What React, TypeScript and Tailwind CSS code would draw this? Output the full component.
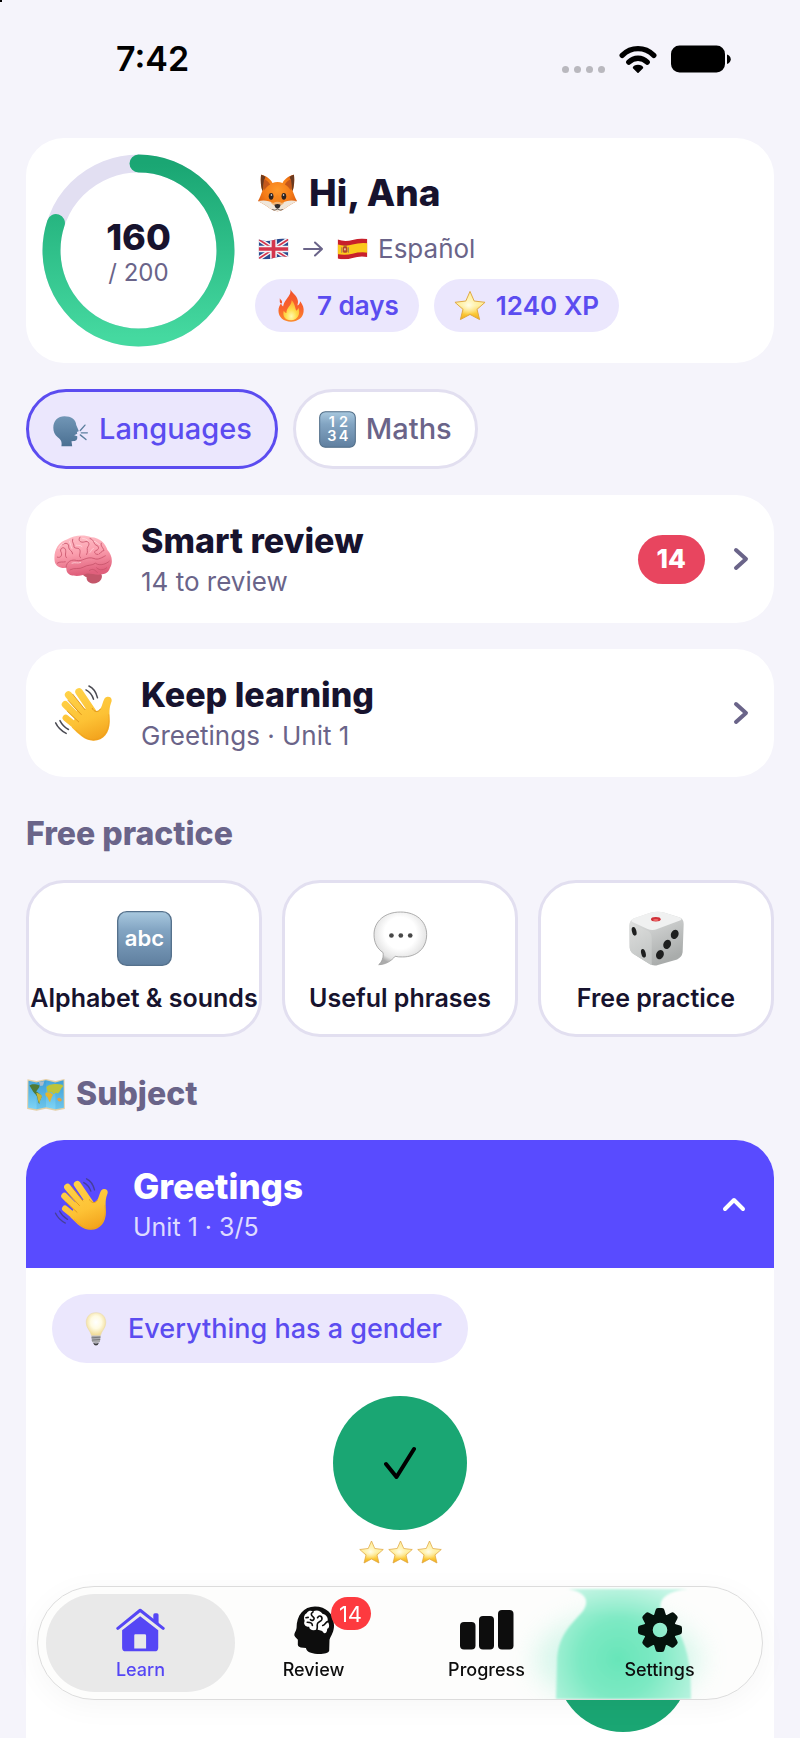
import React, { useId } from "react";

type IconProps = { className?: string };

function WaveHand({ className = "", dark = "#4a4a52" }: IconProps & { dark?: string }) {
  const id = useId();
  return (
    <svg viewBox="0 0 176 176" className={className} aria-hidden="true">
      <defs>
        <linearGradient id={id} gradientUnits="userSpaceOnUse" x1="60" y1="10" x2="120" y2="175">
          <stop offset="0" stopColor="#ffd34a" />
          <stop offset="0.6" stopColor="#fdc235" />
          <stop offset="1" stopColor="#f2a21c" />
        </linearGradient>
      </defs>
      <g stroke={`url(#${id})`} strokeLinecap="round" fill="none">
        <path d="M76 24 L122 92" strokeWidth="23" />
        <path d="M44 33 L104 106" strokeWidth="22" />
        <path d="M34 62 L96 124" strokeWidth="21" />
        <path d="M36 103 L84 142" strokeWidth="20" />
      </g>
      <path
        d="M72 75 L118 74 C125 84 134 84 140 76 C149 66 148 40 162 39 C176 38 177 50 173 58 C167 73 168 92 169 110 C171 145 151 173 119 172 C92 171 76 153 54 132 Z"
        fill={`url(#${id})`}
      />
      <g fill="none" stroke="#d88b16" strokeWidth="2.5" strokeLinecap="round">
        <path d="M57 31 L94 78" />
        <path d="M43 50 L83 93" />
        <path d="M41 83 L75 115" />
        <path d="M116 74 C122 86 134 87 141 76" />
      </g>
      <path d="M166 92 C172 135 152 168 119 169 C95 169 80 150 66 139" fill="none" stroke="#ec9b1b" strokeWidth="3" opacity="0.6" />
      <g fill="none" stroke={dark} strokeWidth="4.5" strokeLinecap="round">
        <path d="M106 6 C119 12 128 25 132 42" />
        <path d="M97 18 C109 24 116 34 120 46" />
        <path d="M5 118 C12 133 22 142 37 150" />
        <path d="M18 111 C24 123 33 132 44 138" />
      </g>
    </svg>
  );
}

function Fox({ className = "" }: IconProps) {
  const id = useId();
  return (
    <svg viewBox="0 0 116 112" className={className} aria-hidden="true">
      <defs>
        <radialGradient id={id} cx="0.5" cy="0.42" r="0.6">
          <stop offset="0" stopColor="#ff9a2a" />
          <stop offset="0.6" stopColor="#f47b17" />
          <stop offset="1" stopColor="#d9590c" />
        </radialGradient>
      </defs>
      <path d="M9 2 C22 4 37 14 43 26 Q58 20 73 26 C79 14 94 4 107 2 C109 22 107 38 103 50 C107 60 111 72 116 80 C102 88 88 96 76 105 Q58 115 40 105 C28 96 14 88 0 80 C5 72 9 60 13 50 C9 38 7 22 9 2Z" fill={`url(#${id})`} />
      <path d="M9 2 C13 3 18 5 22 8 C18 18 16 32 16 44 L13 50 C9 38 7 22 9 2Z M107 2 C103 3 98 5 94 8 C98 18 100 32 100 44 L103 50 C107 38 109 22 107 2Z" fill="#6b3a20" />
      <path d="M18 14 C27 18 33 24 36 31 C28 36 22 42 19 48 C17 36 16 24 18 14Z M98 14 C89 18 83 24 80 31 C88 36 94 42 97 48 C99 36 100 24 98 14Z" fill="#c4571b" />
      <path d="M0 80 C15 76 34 78 45 86 Q58 78 71 86 C82 78 101 76 116 80 C102 88 88 96 76 105 Q58 115 40 105 C28 96 14 88 0 80Z" fill="#efe6da" />
      <path d="M58 60 C64 70 70 78 78 84 Q72 94 58 95 Q44 94 38 84 C46 78 52 70 58 60Z" fill="#f0861f" opacity="0.55" />
      <ellipse cx="39" cy="66" rx="7" ry="10" fill="#2c2320" />
      <ellipse cx="77" cy="66" rx="7" ry="10" fill="#2c2320" />
      <circle cx="40" cy="62" r="2.4" fill="#fff" />
      <circle cx="76" cy="62" r="2.4" fill="#fff" />
      <path d="M49 91 Q58 87 67 91 Q66 101 58 103 Q50 101 49 91Z" fill="#2d2a2b" />
      <path d="M42 105 Q50 109 58 104 Q66 109 74 105" fill="none" stroke="#3b3431" strokeWidth="2" />
    </svg>
  );
}

function FlagUK({ className = "" }: IconProps) {
  const id = useId();
  return (
    <svg viewBox="0 0 92 64" className={className} aria-hidden="true">
      <clipPath id={id}>
        <path d="M2 4 Q24 12 46 5 T90 2 L90 56 Q68 52 46 59 T2 60Z" />
      </clipPath>
      <g clipPath={`url(#${id})`}>
        <rect width="92" height="64" fill="#2a4a8f" />
        <path d="M0 2 L92 62 M92 2 L0 62" stroke="#f3f3f6" strokeWidth="13" />
        <path d="M0 2 L92 62 M92 2 L0 62" stroke="#d4354c" strokeWidth="5" />
        <path d="M46 0 V64 M0 32 H92" stroke="#f3f3f6" strokeWidth="20" />
        <path d="M46 0 V64 M0 32 H92" stroke="#d4354c" strokeWidth="11" />
      </g>
    </svg>
  );
}

function FlagSpain({ className = "" }: IconProps) {
  const id = useId();
  return (
    <svg viewBox="0 0 92 64" className={className} aria-hidden="true">
      <clipPath id={id}>
        <path d="M2 4 Q24 12 46 5 T90 2 L90 56 Q68 52 46 59 T2 60Z" />
      </clipPath>
      <g clipPath={`url(#${id})`}>
        <rect width="92" height="64" fill="#c8202b" />
        <path d="M0 18 Q24 26 46 19 T92 15 V43 Q68 40 46 46 T0 47Z" fill="#fbc91c" />
        <rect x="17" y="25" width="14" height="18" rx="4" fill="#b5442c" />
        <path d="M14 27 V43 M34 27 V43" stroke="#a98058" strokeWidth="3" />
        <rect x="19" y="20" width="10" height="6" rx="2" fill="#b5642c" />
        <rect x="21" y="30" width="5" height="6" fill="#e7c9a0" />
      </g>
    </svg>
  );
}

function Flame({ className = "" }: IconProps) {
  const id = useId();
  return (
    <svg viewBox="0 0 80 100" className={className} aria-hidden="true">
      <defs>
        <linearGradient id={id} x1="0" y1="0" x2="0" y2="1">
          <stop offset="0" stopColor="#f0512a" />
          <stop offset="0.6" stopColor="#f9642c" />
          <stop offset="1" stopColor="#fb8a2c" />
        </linearGradient>
        <radialGradient id={`${id}b`} cx="0.5" cy="0.8" r="0.7">
          <stop offset="0" stopColor="#fff9b0" />
          <stop offset="0.5" stopColor="#ffdc4a" />
          <stop offset="1" stopColor="#fdaf33" />
        </radialGradient>
      </defs>
      <path d="M38 1 C42 12 58 18 61 36 C62 43 59 47 60 50 C65 47 67 42 68 37 C76 48 80 58 78 70 C76 88 60 99 40 99 C18 99 2 86 2 66 C2 56 6 49 10 44 C11 48 13 51 16 53 C18 44 20 38 27 30 C34 21 40 14 38 1Z" fill={`url(#${id})`} />
      <path d="M6 28 C9 34 14 34 13 41 C12 46 6 44 6 38Z" fill="#f0562d" />
      <path d="M42 34 C52 44 52 56 56 66 C60 64 62 60 63 57 C69 78 60 94 40 95 C20 95 14 80 18 66 C20 70 22 72 26 73 C26 56 42 50 42 34Z" fill={`url(#${id}b)`} />
    </svg>
  );
}

function Star({ className = "" }: IconProps) {
  const id = useId();
  return (
    <svg viewBox="0 0 100 94" className={className} aria-hidden="true">
      <defs>
        <linearGradient id={id} x1="0" y1="0" x2="0" y2="1">
          <stop offset="0" stopColor="#fff1a6" />
          <stop offset="0.5" stopColor="#ffefa0" />
          <stop offset="0.78" stopColor="#fccb3c" />
          <stop offset="1" stopColor="#f1aa12" />
        </linearGradient>
        <radialGradient id={`${id}b`} cx="0.45" cy="0.48" r="0.4">
          <stop offset="0" stopColor="#fffde8" />
          <stop offset="1" stopColor="#fff5bb" stopOpacity="0" />
        </radialGradient>
      </defs>
      <path d="M50 3 L63 33 L97 37 L72 59 L80 91 L50 75 L20 91 L28 59 L3 37 L37 33Z" fill={`url(#${id})`} stroke="#dfa640" strokeWidth="3" strokeLinejoin="round" />
      <path d="M50 8 L62 35 L92 38 L69 58 L76 87 L50 71 L24 87 L31 58 L8 38 L38 35Z" fill={`url(#${id}b)`} />
    </svg>
  );
}

function SpeakingHead({ className = "" }: IconProps) {
  const id = useId();
  return (
    <svg viewBox="0 0 104 92" className={className} aria-hidden="true">
      <defs>
        <linearGradient id={id} x1="0" y1="0" x2="0" y2="1">
          <stop offset="0" stopColor="#7196b6" />
          <stop offset="1" stopColor="#4b7092" />
        </linearGradient>
      </defs>
      <path d="M34 1 C54 1 68 11 69 27 L76 43 C77 46 74 47 71 47 L72 53 L63 57 L72 60 C73 68 71 74 62 74 L55 75 L57 90 H25 C27 78 25 71 14 63 C5 56 1 47 1 35 C1 14 15 1 34 1Z" fill={`url(#${id})`} />
      <path d="M81 43 L95 27 M84 50 H102 M81 56 L98 70" stroke="#5b7f9e" strokeWidth="4" strokeLinecap="round" />
    </svg>
  );
}

function KeycapDefs({ id }: { id: string }) {
  return (
    <defs>
      <linearGradient id={id} x1="0" y1="0" x2="0" y2="1">
        <stop offset="0" stopColor="#a9c9df" />
        <stop offset="0.35" stopColor="#82a4c2" />
        <stop offset="1" stopColor="#5f7f9f" />
      </linearGradient>
    </defs>
  );
}

function Numbers({ className = "" }: IconProps) {
  const id = useId();
  return (
    <svg viewBox="0 0 110 110" className={className} aria-hidden="true">
      <KeycapDefs id={id} />
      <rect x="2" y="2" width="106" height="106" rx="17" fill={`url(#${id})`} stroke="#4f6c86" strokeWidth="3" />
      <g fill="#fff" fontFamily="Inter, sans-serif" fontSize="43" fontWeight="600" textAnchor="middle">
        <text x="38" y="49">1</text>
        <text x="73" y="49">2</text>
        <text x="38" y="90">3</text>
        <text x="73" y="90">4</text>
      </g>
    </svg>
  );
}

function Abc({ className = "" }: IconProps) {
  const id = useId();
  return (
    <svg viewBox="0 0 164 164" className={className} aria-hidden="true">
      <KeycapDefs id={id} />
      <rect x="2" y="2" width="160" height="160" rx="27" fill={`url(#${id})`} stroke="#55718c" strokeWidth="4" />
      <text x="82" y="103" fill="#fff" fontFamily="Inter, sans-serif" fontSize="66" fontWeight="600" textAnchor="middle">abc</text>
    </svg>
  );
}

function Brain({ className = "" }: IconProps) {
  const id = useId();
  return (
    <svg viewBox="0 0 174 146" className={className} aria-hidden="true">
      <defs>
        <linearGradient id={id} x1="0" y1="0" x2="0.2" y2="1">
          <stop offset="0" stopColor="#ffc3ca" />
          <stop offset="0.5" stopColor="#fb9fae" />
          <stop offset="1" stopColor="#e0607c" />
        </linearGradient>
      </defs>
      <path d="M86 112 C96 104 128 106 143 118 C147 132 136 144 120 145 C104 145 96 134 98 126 C92 124 84 120 86 112Z" fill="#c4566a" />
      <path d="M2 78 C-2 50 10 20 40 12 C58 0 90 -3 112 6 C136 6 156 26 160 44 C174 58 178 82 168 98 C164 112 154 118 142 117 C128 122 108 112 96 116 C84 124 48 126 40 112 C36 106 38 100 36 98 C18 100 4 92 2 78Z" fill={`url(#${id})`} />
      <g fill="none" stroke="#c9556c" strokeWidth="2.6" strokeLinecap="round">
        <path d="M36 96 C38 78 54 72 68 76 C86 80 98 62 120 70 C132 76 146 66 154 62" />
        <path d="M48 104 C62 96 76 104 88 96 C100 88 116 92 124 84 C138 94 158 86 166 78" />
        <path d="M10 66 C22 70 26 58 20 48 C18 38 30 34 34 42 C38 52 30 62 38 68" />
        <path d="M26 28 C36 20 46 26 44 36 C44 46 56 46 56 56" />
        <path d="M56 12 C52 22 62 26 60 36 C66 42 76 36 78 46 C80 56 72 62 80 68" />
        <path d="M78 6 C70 16 80 24 92 20 C104 16 108 26 102 34 C96 42 104 48 98 58" />
        <path d="M108 10 C122 14 118 26 126 30 C136 32 136 44 126 46 C118 50 122 58 132 58" />
        <path d="M142 24 C138 32 148 38 150 46 C140 48 142 54 136 56" />
        <path d="M10 84 C18 78 26 82 34 80 M128 98 C138 108 150 104 158 98 M106 106 C114 100 122 102 130 112" />
      </g>
      <g fill="none" stroke="#ffe0e3" strokeWidth="2.6" strokeLinecap="round" opacity="0.8">
        <path d="M14 40 C18 30 24 26 30 24 M46 18 C50 26 50 34 54 40 M86 10 C92 10 98 12 102 16 M66 30 C72 32 78 28 84 34 M120 18 C128 20 130 26 136 28" />
        <path d="M54 84 C64 80 70 86 80 82 M108 52 C112 48 112 42 118 40" />
      </g>
    </svg>
  );
}

function SpeechBubble({ className = "" }: IconProps) {
  const id = useId();
  return (
    <svg viewBox="0 0 164 164" className={className} aria-hidden="true">
      <defs>
        <radialGradient id={id} cx="0.5" cy="0.4" r="0.6">
          <stop offset="0.5" stopColor="#ffffff" />
          <stop offset="0.85" stopColor="#e3e3e3" />
          <stop offset="1" stopColor="#acacac" />
        </radialGradient>
      </defs>
      <path d="M82 3 C130 3 160 32 160 70 C160 112 130 137 88 137 C80 137 73 137 66 135 C54 150 36 160 17 160 C27 152 32 138 30 124 C12 112 3 94 3 70 C3 32 34 3 82 3Z" fill={`url(#${id})`} stroke="#9e9e9e" strokeWidth="2.5" />
      <circle cx="55" cy="73" r="7" fill="#484848" />
      <circle cx="83" cy="73" r="7" fill="#484848" />
      <circle cx="111" cy="73" r="7" fill="#484848" />
    </svg>
  );
}

function Dice({ className = "" }: IconProps) {
  const id = useId();
  return (
    <svg viewBox="0 0 160 160" className={className} aria-hidden="true">
      <defs>
        <linearGradient id={id} x1="0" y1="0" x2="0.5" y2="1">
          <stop offset="0" stopColor="#e6e7e7" />
          <stop offset="1" stopColor="#a9acab" />
        </linearGradient>
        <linearGradient id={`${id}b`} x1="0" y1="0" x2="0.3" y2="1">
          <stop offset="0" stopColor="#dddedd" />
          <stop offset="1" stopColor="#c3c6c5" />
        </linearGradient>
      </defs>
      <path d="M62 5 Q84 -1 104 5 L148 19 Q160 25 159 40 L156 120 Q154 134 140 141 L84 157 Q72 162 58 153 L12 124 Q3 118 2 106 L1 42 Q1 28 13 22Z" fill={`url(#${id})`} />
      <path d="M3 34 Q20 42 56 58 Q66 64 66 80 L66 157 Q62 157 56 152 L12 124 Q3 118 2 106 L1 42Z" fill={`url(#${id}b)`} />
      <path d="M62 5 Q84 -1 104 5 L148 19 Q156 24 150 27 L82 52 Q68 58 54 52 L10 32 Q4 27 13 22Z" fill="#f0f1f1" />
      <ellipse cx="78" cy="24" rx="14" ry="6.5" fill="#cf3038" />
      <ellipse cx="78" cy="26" rx="8" ry="3" fill="#ef6a6a" />
      <g fill="#1e1f1f">
        <ellipse cx="15" cy="59" rx="6.5" ry="13" transform="rotate(-14 15 59)" />
        <ellipse cx="42" cy="123" rx="6.5" ry="13" transform="rotate(-14 42 123)" />
        <ellipse cx="133" cy="68" rx="11" ry="14" transform="rotate(22 133 68)" />
        <ellipse cx="111" cy="97" rx="11" ry="14" transform="rotate(22 111 97)" />
        <ellipse cx="90" cy="127" rx="11" ry="14" transform="rotate(22 90 127)" />
      </g>
    </svg>
  );
}

function WorldMap({ className = "" }: IconProps) {
  const id = useId();
  return (
    <svg viewBox="0 0 114 98" className={className} aria-hidden="true">
      <defs>
        <linearGradient id={id} x1="0" y1="0" x2="0" y2="1">
          <stop offset="0" stopColor="#45a5dc" />
          <stop offset="1" stopColor="#7ed4f5" />
        </linearGradient>
      </defs>
      <path d="M2 4 L29 9 L57 3 L85 9 L112 3 L113 92 L85 97 L57 91 L29 97 L1 92Z" fill="#e3cfa6" />
      <path d="M5 8 L29 13 L57 7 L85 13 L109 7 L110 88 L85 93 L57 87 L29 93 L4 88Z" fill={`url(#${id})`} />
      <path d="M29 13 L57 7 V87 L29 93Z M85 13 L109 7 L110 88 L85 93Z" fill="#2486c4" opacity="0.18" />
      <path d="M8 22 C16 16 28 18 38 22 C38 30 30 34 28 40 C34 44 42 50 44 54 C42 64 38 66 37 78 C32 70 33 60 30 54 C26 48 18 42 16 36Z" fill="#4f7a35" />
      <path d="M28 44 C36 46 44 50 45 54 C42 62 39 68 37 76 C33 68 32 56 28 44Z" fill="#c5b63c" />
      <path d="M36 12 L52 10 L48 22 L40 24Z" fill="#a9bccb" />
      <path d="M58 28 C64 18 86 16 106 20 L108 26 C100 30 100 42 92 46 L86 44 L80 48 L74 42 L62 42Z" fill="#bdc43a" />
      <path d="M56 44 C62 40 72 42 78 50 C74 58 72 62 69 72 C64 68 64 60 60 56 C55 54 54 48 56 44Z" fill="#e4b62e" />
      <path d="M90 62 C96 56 102 58 104 66 C100 72 92 70 90 62Z" fill="#dda346" />
    </svg>
  );
}

function Bulb({ className = "" }: IconProps) {
  const id = useId();
  return (
    <svg viewBox="0 0 64 104" className={className} aria-hidden="true">
      <defs>
        <radialGradient id={id} cx="0.5" cy="0.42" r="0.55">
          <stop offset="0" stopColor="#ffffff" />
          <stop offset="0.5" stopColor="#fffbe2" />
          <stop offset="1" stopColor="#f1dc9a" />
        </radialGradient>
      </defs>
      <path d="M32 2 C51 2 62 15 62 32 C62 50 48 58 46 72 H18 C16 58 2 50 2 32 C2 15 13 2 32 2Z" fill={`url(#${id})`} stroke="#e8d7a4" strokeWidth="1.5" />
      <path d="M18 73 H46 L44 92 Q32 98 20 92Z" fill="#a9a9ac" />
      <path d="M18 79 L46 77 M19 86 L45 84" stroke="#6f6f73" strokeWidth="2.5" />
      <path d="M23 94 Q32 98 41 94 L37 101 Q32 104 27 101Z" fill="#3d3d40" />
    </svg>
  );
}

function Chevron({ className = "", d, box }: IconProps & { d: string; box: string }) {
  return (
    <svg viewBox={box} className={className} fill="none" stroke="currentColor" strokeWidth="4" strokeLinecap="round" strokeLinejoin="round" aria-hidden="true">
      <path d={d} />
    </svg>
  );
}

function StatusBar() {
  return (
    <header className="flex h-[118px] items-center justify-between pr-[69px] pl-[116px]">
      <time className="text-[34px] leading-10 font-semibold text-black">7:42</time>
      <div className="flex items-center gap-[14px]">
        <div className="flex h-7 items-end gap-[5px]">
          <span className="size-[7px] rounded-full bg-[#b9b8be]" />
          <span className="size-[7px] rounded-full bg-[#b9b8be]" />
          <span className="size-[7px] rounded-full bg-[#b9b8be]" />
          <span className="size-[7px] rounded-full bg-[#b9b8be]" />
        </div>
        <svg viewBox="0 0 38 28" className="h-7 w-[38px]" aria-label="Wi-Fi">
          <g fill="none" stroke="#000" strokeWidth="5.4" strokeLinecap="round">
            <path d="M3.2 10.300 C12.200 1.4 25.800 1.4 34.800 10.300" />
            <path d="M9.800 17.200 C15 12 23 12 28.200 17.200" />
          </g>
          <path d="M19 27.300 L14.500 22.700 C15.500 19.800 22.500 19.800 23.500 22.700Z" stroke="#000" strokeWidth="1.5" strokeLinejoin="round" />
        </svg>
        <svg viewBox="0 0 60 28" className="h-7 w-[60px]" aria-label="Battery">
          <rect x="0" y="0.500" width="54" height="27" rx="8.500" />
          <path d="M56 9.500 C61 11 61 17.500 56 19Z" />
        </svg>
      </div>
    </header>
  );
}

function ProgressRing() {
  const id = useId();
  const length = 2 * Math.PI * 87;
  return (
    <div className="grid size-[193px] shrink-0 place-items-center">
      <svg viewBox="0 0 193 193" className="col-start-1 row-start-1 size-full -rotate-90" aria-hidden="true">
        <defs>
          <linearGradient id={id} x1="1" y1="0" x2="0" y2="0">
            <stop offset="0" stopColor="#1aa673" />
            <stop offset="1" stopColor="#45d9a0" />
          </linearGradient>
        </defs>
        <circle cx="96.5" cy="96.5" r="87" fill="none" stroke="#e2dff2" strokeWidth="18" />
        <circle cx="96.5" cy="96.5" r="87" fill="none" stroke={`url(#${id})`} strokeWidth="18" strokeLinecap="round" strokeDasharray={`${length * 0.8} ${length}`} />
      </svg>
      <div className="col-start-1 row-start-1 pt-2 text-center">
        <p className="text-[36px] leading-9 font-extrabold text-[#17132e]">160</p>
        <p className="text-2xl leading-9 text-[#6a6489]">/ 200</p>
      </div>
    </div>
  );
}

function Chip({ icon, children }: { icon: React.ReactNode; children: React.ReactNode }) {
  return (
    <span className="flex h-[53px] items-center gap-2.5 rounded-full bg-[#ebe7fd] px-5 text-[26px] leading-8 font-semibold whitespace-nowrap text-[#5b4cf0]">
      {icon}
      {children}
    </span>
  );
}

function ProfileCard() {
  return (
    <section className="flex gap-5 rounded-[38px] bg-white p-4">
      <ProgressRing />
      <div className="flex flex-col justify-center">
        <h1 className="flex h-12 items-center gap-3 pl-[3px] text-[37px] font-extrabold text-[#17132e]">
          <Fox className="h-[38px] w-[39px]" />
          Hi, Ana
        </h1>
        <p className="mt-3.5 flex h-9 items-center pl-[3px] text-[26px] leading-9 text-[#6a6489]">
          <FlagUK className="h-[22px] w-[31px]" />
          <svg viewBox="0 0 20 16" className="mx-3.5 h-4 w-5" fill="none" stroke="currentColor" strokeWidth="2" strokeLinecap="round" strokeLinejoin="round" aria-label="to">
            <path d="M1 8 H19 M12 1.500 L19 8 L12 14.500" />
          </svg>
          <FlagSpain className="mr-2.5 h-[22px] w-[31px]" />
          Español
        </p>
        <div className="mt-3 flex gap-[15px]">
          <Chip icon={<Flame className="h-[33px] w-8" />}>7 days</Chip>
          <Chip icon={<Star className="h-[31px] w-8" />}>1240 XP</Chip>
        </div>
      </div>
    </section>
  );
}

function ActionCard({ icon, title, detail, badge }: { icon: React.ReactNode; title: string; detail: string; badge?: number }) {
  return (
    <button type="button" className="flex h-32 w-full items-center rounded-[38px] bg-white pr-[25px] pl-7 text-left">
      {icon}
      <span className="ml-[29px] flex flex-1 flex-col">
        <span className="text-[34px] leading-[46px] font-extrabold text-[#17132e]">{title}</span>
        <span className="text-[26px] leading-9 text-[#6a6489]">{detail}</span>
      </span>
      {badge !== undefined && (
        <span className="mr-[28px] flex h-[49px] items-center rounded-full bg-[#e8455f] px-[19px] text-[26px] leading-8 font-extrabold text-white">{badge}</span>
      )}
      <Chevron className="h-6 w-4 text-[#6a6489]" box="0 0 16 24" d="M3 3 L13 12 L3 21" />
    </button>
  );
}

function PracticeTile({ icon, label }: { icon: React.ReactNode; label: string }) {
  return (
    <button type="button" className="flex h-[157px] flex-col items-center rounded-[38px] border-[3px] border-[#e2dff0] bg-white pt-7">
      {icon}
      <span className="mt-4 text-[25px] leading-8 font-semibold whitespace-nowrap text-[#17132e]">{label}</span>
    </button>
  );
}

function UnitPanel() {
  return (
    <section className="flex flex-1 flex-col overflow-hidden rounded-t-[38px] bg-white">
      <button type="button" className="flex h-32 items-center bg-[#594bff] pr-7 pl-7 text-left text-white" aria-expanded="true">
        <WaveHand className="size-[54px]" dark="#46409a" />
        <span className="ml-[25px] flex flex-1 flex-col">
          <span className="text-[35px] leading-[46px] font-extrabold">Greetings</span>
          <span className="text-[25px] leading-9 text-[#dedbff]">Unit 1 · 3/5</span>
        </span>
        <Chevron className="h-4 w-6" box="0 0 24 16" d="M3 13 L12 4 L21 13" />
      </button>
      <div className="flex flex-col px-[26px] pt-[26px]">
        <button type="button" className="flex h-[69px] items-center gap-3.5 self-start rounded-full bg-[#ebe7fd] px-[26px] text-[27px] leading-9 font-medium text-[#5b4cf0]">
          <Bulb className="h-[34px] w-9" />
          Everything has a gender
        </button>
        <div className="mt-[33px] flex flex-col items-center">
          <button type="button" aria-label="Lesson 1, completed" className="grid size-[134px] place-items-center rounded-full bg-[#1aa673]">
            <svg viewBox="0 0 32 34" className="h-[34px] w-8" fill="none" stroke="#000" strokeWidth="4" strokeLinecap="round" strokeLinejoin="round" aria-hidden="true">
              <path d="M2 18 L12.500 31 L30 3" />
            </svg>
          </button>
          <div className="mt-2 flex h-7 items-center gap-1">
            <Star className="h-6 w-[25px]" />
            <Star className="h-6 w-[25px]" />
            <Star className="h-6 w-[25px]" />
          </div>
        </div>
        <div className="mt-8 mr-[58px] flex justify-end">
          <button type="button" aria-label="Lesson 2, completed" className="size-[134px] rounded-full bg-[#1aa673]" />
        </div>
      </div>
    </section>
  );
}

function HomeIcon() {
  return (
    <svg viewBox="0 0 148 134" className="h-11 w-[49px]" aria-hidden="true">
      <path d="M5 62 L73 7 L143 62" fill="none" stroke="#5546f5" strokeWidth="9.5" strokeLinecap="round" strokeLinejoin="round" />
      <path d="M113 36 V21 Q113 16 118 16 H124 Q129 16 129 21 V48Z" fill="#5546f5" />
      <path fillRule="evenodd" d="M18 68 L73 25 L128 68 V121 Q128 132 117 132 H29 Q18 132 18 121Z M58 80 Q55 80 55 84 V123 H91 V84 Q91 80 87 80Z" fill="#5546f5" />
    </svg>
  );
}

function HeadIcon() {
  return (
    <svg viewBox="0 0 130 152" className="h-[50px] w-[42px]" aria-hidden="true">
      <path d="M68 3 C102 3 127 25 127 62 C127 82 118 92 113 106 L112 140 C110 148 93 151 75 150 C55 149 42 144 40 132 L24 130 C16 129 14 124 15 115 L15 106 C14 102 6 100 4 92 C3 86 10 80 11 70 C11 30 33 3 68 3Z" fill="#0d0d0d" />
      <path d="M42 24 C49 14 58 16 62 19 C72 12 86 16 91 26 C104 28 110 40 107 50 C115 60 112 72 106 72 C106 84 98 90 94 84 C90 76 82 78 74 74 C64 80 50 76 50 66 C36 66 32 56 36 48 C32 38 34 28 42 24Z" fill="#fff" />
      <g fill="none" stroke="#0d0d0d" strokeWidth="5" strokeLinecap="round">
        <path d="M62 20 C52 26 58 32 63 36 C70 42 60 50 54 44" />
        <path d="M44 52 C54 52 60 56 60 62" />
        <path d="M76 38 C82 28 92 34 89 44 C86 52 74 50 75 60 C75 66 76 70 74 74" />
        <path d="M107 50 C100 52 100 60 92 62" />
        <path d="M40 38 L47 37" />
      </g>
    </svg>
  );
}

function BarsIcon() {
  return (
    <svg viewBox="0 0 54 40" className="h-10 w-[54px]" fill="#0d0d0d" aria-hidden="true">
      <rect x="0" y="12" width="15.500" height="27.500" rx="4" />
      <rect x="19" y="6" width="15" height="33.500" rx="4" />
      <rect x="38" y="0" width="15.500" height="39.500" rx="4" />
    </svg>
  );
}

function GearIcon() {
  return (
    <svg viewBox="-22 -22 44 44" className="size-11" aria-hidden="true">
      <circle r="11.800" fill="none" stroke="#05120c" strokeWidth="9" />
      {[0, 45, 90, 135, 180, 225, 270, 315].map((angle) => (
        <path key={angle} d="M-6.500 -13 L-4.400 -20 Q-4 -22 -2 -22 H2 Q4 -22 4.400 -20 L6.500 -13Z" transform={`rotate(${angle})`} fill="#05120c" />
      ))}
    </svg>
  );
}

function GlassTint() {
  const id = useId();
  const shape = "M66 2 C84 5 88 14 81 24 C70 37 55 48 55 76 L54 112 H189 C189 90 188 72 181 54 C176 40 162 30 159 22 C156 12 166 4 186 2Z";
  return (
    <svg viewBox="0 0 260 112" className="pointer-events-none absolute top-0 right-0 h-full w-[260px]" aria-hidden="true">
      <defs>
        <radialGradient id={id} gradientUnits="userSpaceOnUse" cx="116" cy="72" r="84">
          <stop offset="0" stopColor="#68e5b9" />
          <stop offset="0.45" stopColor="#7ce9c3" />
          <stop offset="0.8" stopColor="#a4f0d5" />
          <stop offset="1" stopColor="#b9f3e0" />
        </radialGradient>
        <linearGradient id={`${id}t`} x1="0" y1="0" x2="0" y2="1">
          <stop offset="0" stopColor="#fff" stopOpacity="0.2" />
          <stop offset="0.25" stopColor="#fff" stopOpacity="0" />
        </linearGradient>
        <filter id={`${id}f`} x="-50%" y="-50%" width="200%" height="200%">
          <feGaussianBlur stdDeviation="14" />
        </filter>
        <filter id={`${id}s`}>
          <feGaussianBlur stdDeviation="0.8" />
        </filter>
      </defs>
      <ellipse cx="116" cy="72" rx="82" ry="44" fill="#8eeccb" opacity="0.35" filter={`url(#${id}f)`} />
      <g filter={`url(#${id}s)`}>
        <path d={shape} fill={`url(#${id})`} />
        <path d={shape} fill={`url(#${id}t)`} />
      </g>
    </svg>
  );
}

function Tab({ icon, label, badge, active = false }: { icon: React.ReactNode; label: string; badge?: number; active?: boolean }) {
  return (
    <a href="#" aria-current={active ? "page" : undefined} className={`relative flex flex-1 flex-col items-center pt-3.5 ${active ? "text-[#5546f5]" : "text-[#0d0d0d]"}`}>
      {active && <span className="absolute inset-y-0 -inset-x-2 rounded-full bg-[#e9e9e9]" />}
      <span className="relative flex h-11 items-center justify-center">
        {icon}
        {badge !== undefined && (
          <span className="absolute -top-[11px] left-[38px] flex h-[33px] w-10 items-center justify-center rounded-full bg-[#fd3a3f] text-[22px] leading-none text-white">{badge}</span>
        )}
      </span>
      <span className="relative mt-1.5 text-lg leading-6 font-medium">{label}</span>
    </a>
  );
}

function TabBar() {
  return (
    <nav className="fixed inset-x-[37px] bottom-[38px] h-[114px] overflow-hidden rounded-full border border-[#dcdcdc] bg-[#fdfdfc] shadow-[0_6px_30px_rgba(0,0,0,0.04)]">
      <GlassTint />
      <div className="relative flex h-full px-4 py-[7px]">
        <Tab active icon={<HomeIcon />} label="Learn" />
        <Tab icon={<HeadIcon />} label="Review" badge={14} />
        <Tab icon={<BarsIcon />} label="Progress" />
        <Tab icon={<GearIcon />} label="Settings" />
      </div>
    </nav>
  );
}

export default function App() {
  return (
    <div className="flex min-h-screen flex-col bg-[#f5f4fb] font-['Inter','Liberation_Sans',sans-serif]">
      <span className="absolute top-0 left-0 size-0.5 bg-black" />
      <StatusBar />
      <main className="mt-5 flex flex-1 flex-col gap-[26px] px-[26px]">
        <ProfileCard />
        <div className="flex gap-[15px]">
          <button type="button" aria-pressed="true" className="flex h-20 items-center gap-2.5 rounded-full border-[3px] border-[#5b4cf0] bg-[#ebe7fd] px-[23px] text-[29px] leading-9 font-medium text-[#5b4cf0]">
            <SpeakingHead className="mt-1 h-[31px] w-[37px]" />
            Languages
          </button>
          <button type="button" aria-pressed="false" className="flex h-20 items-center gap-2.5 rounded-full border-[3px] border-[#e2dff0] bg-white px-[23px] text-[29px] leading-9 font-medium text-[#6a6489]">
            <Numbers className="size-[37px]" />
            Maths
          </button>
        </div>
        <ActionCard icon={<Brain className="h-[49px] w-[58px]" />} title="Smart review" detail="14 to review" badge={14} />
        <ActionCard icon={<WaveHand className="size-[58px]" />} title="Keep learning" detail="Greetings · Unit 1" />
        <h2 className="mt-[11px] text-[32px] leading-10 font-extrabold text-[#6a6489]">Free practice</h2>
        <div className="grid grid-cols-3 gap-5">
          <PracticeTile icon={<Abc className="size-[55px]" />} label="Alphabet & sounds" />
          <PracticeTile icon={<SpeechBubble className="size-[55px]" />} label="Useful phrases" />
          <PracticeTile icon={<Dice className="size-[55px]" />} label="Free practice" />
        </div>
        <h2 className="mt-[11px] flex items-center gap-2.5 text-[32px] leading-10 font-extrabold text-[#6a6489]">
          <WorldMap className="h-[33px] w-10" />
          Subject
        </h2>
        <UnitPanel />
      </main>
      <TabBar />
    </div>
  );
}
